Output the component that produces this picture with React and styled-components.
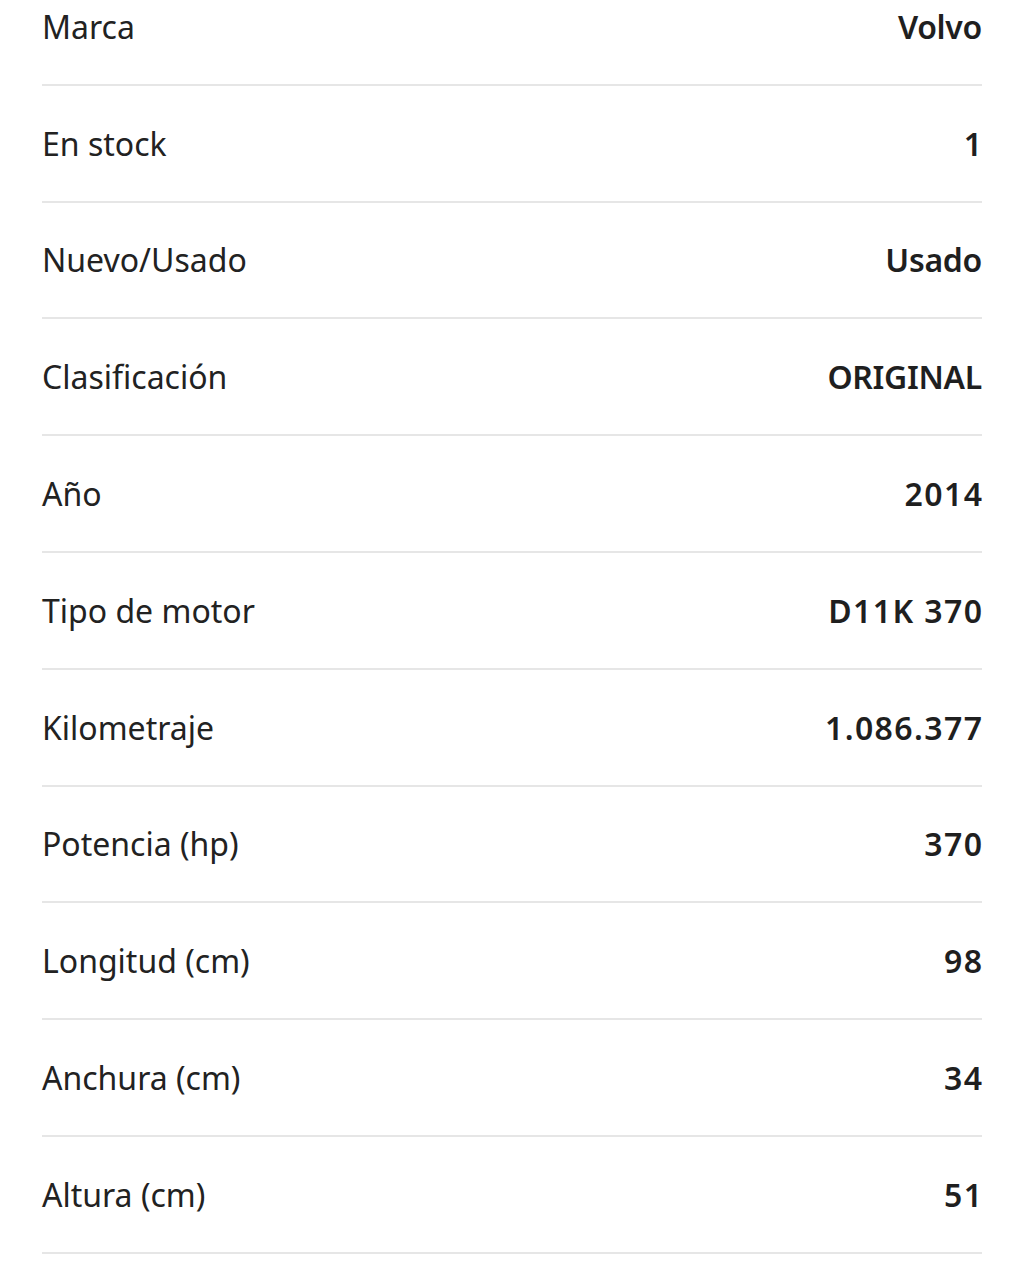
import React from "react";
import styled, { createGlobalStyle } from "styled-components";

const GlobalStyle = createGlobalStyle`
  html, body {
    margin: 0;
    padding: 0;
    background: #ffffff;
  }
  body {
    font-family: "Noto Sans", "Open Sans", sans-serif;
    color: #222222;
  }
`;

const Table = styled.div`
  margin: -31px 42px 0 42px;
  display: flex;
  flex-direction: column;
`;

const Row = styled.div`
  box-sizing: border-box;
  height: 116.8px;
  display: flex;
  align-items: center;
  justify-content: space-between;
  border-bottom: 2px solid #e6e6e6;
`;

const Label = styled.span`
  font-size: 32px;
  font-weight: 400;
  color: #222222;
`;

const Value = styled.span`
  font-size: 32px;
  font-weight: 600;
  letter-spacing: ${(p) => (p.$numeric ? "1.4px" : "-0.3px")};
  margin-right: ${(p) => (p.$numeric ? "-1.4px" : "0")};
  color: #1f1f1f;
`;

const SPECS = [
  ["Marca", "Volvo"],
  ["En stock", "1"],
  ["Nuevo/Usado", "Usado"],
  ["Clasificación", "ORIGINAL"],
  ["Año", "2014"],
  ["Tipo de motor", "D11K 370"],
  ["Kilometraje", "1.086.377"],
  ["Potencia (hp)", "370"],
  ["Longitud (cm)", "98"],
  ["Anchura (cm)", "34"],
  ["Altura (cm)", "51"],
];

const App = () => {
  return (
    <>
      <GlobalStyle />
      <Table>
        {SPECS.map(([label, value]) => (
          <Row key={label}>
            <Label>{label}</Label>
            <Value $numeric={/\d/.test(value)}>{value}</Value>
          </Row>
        ))}
      </Table>
    </>
  );
};

export default App;
